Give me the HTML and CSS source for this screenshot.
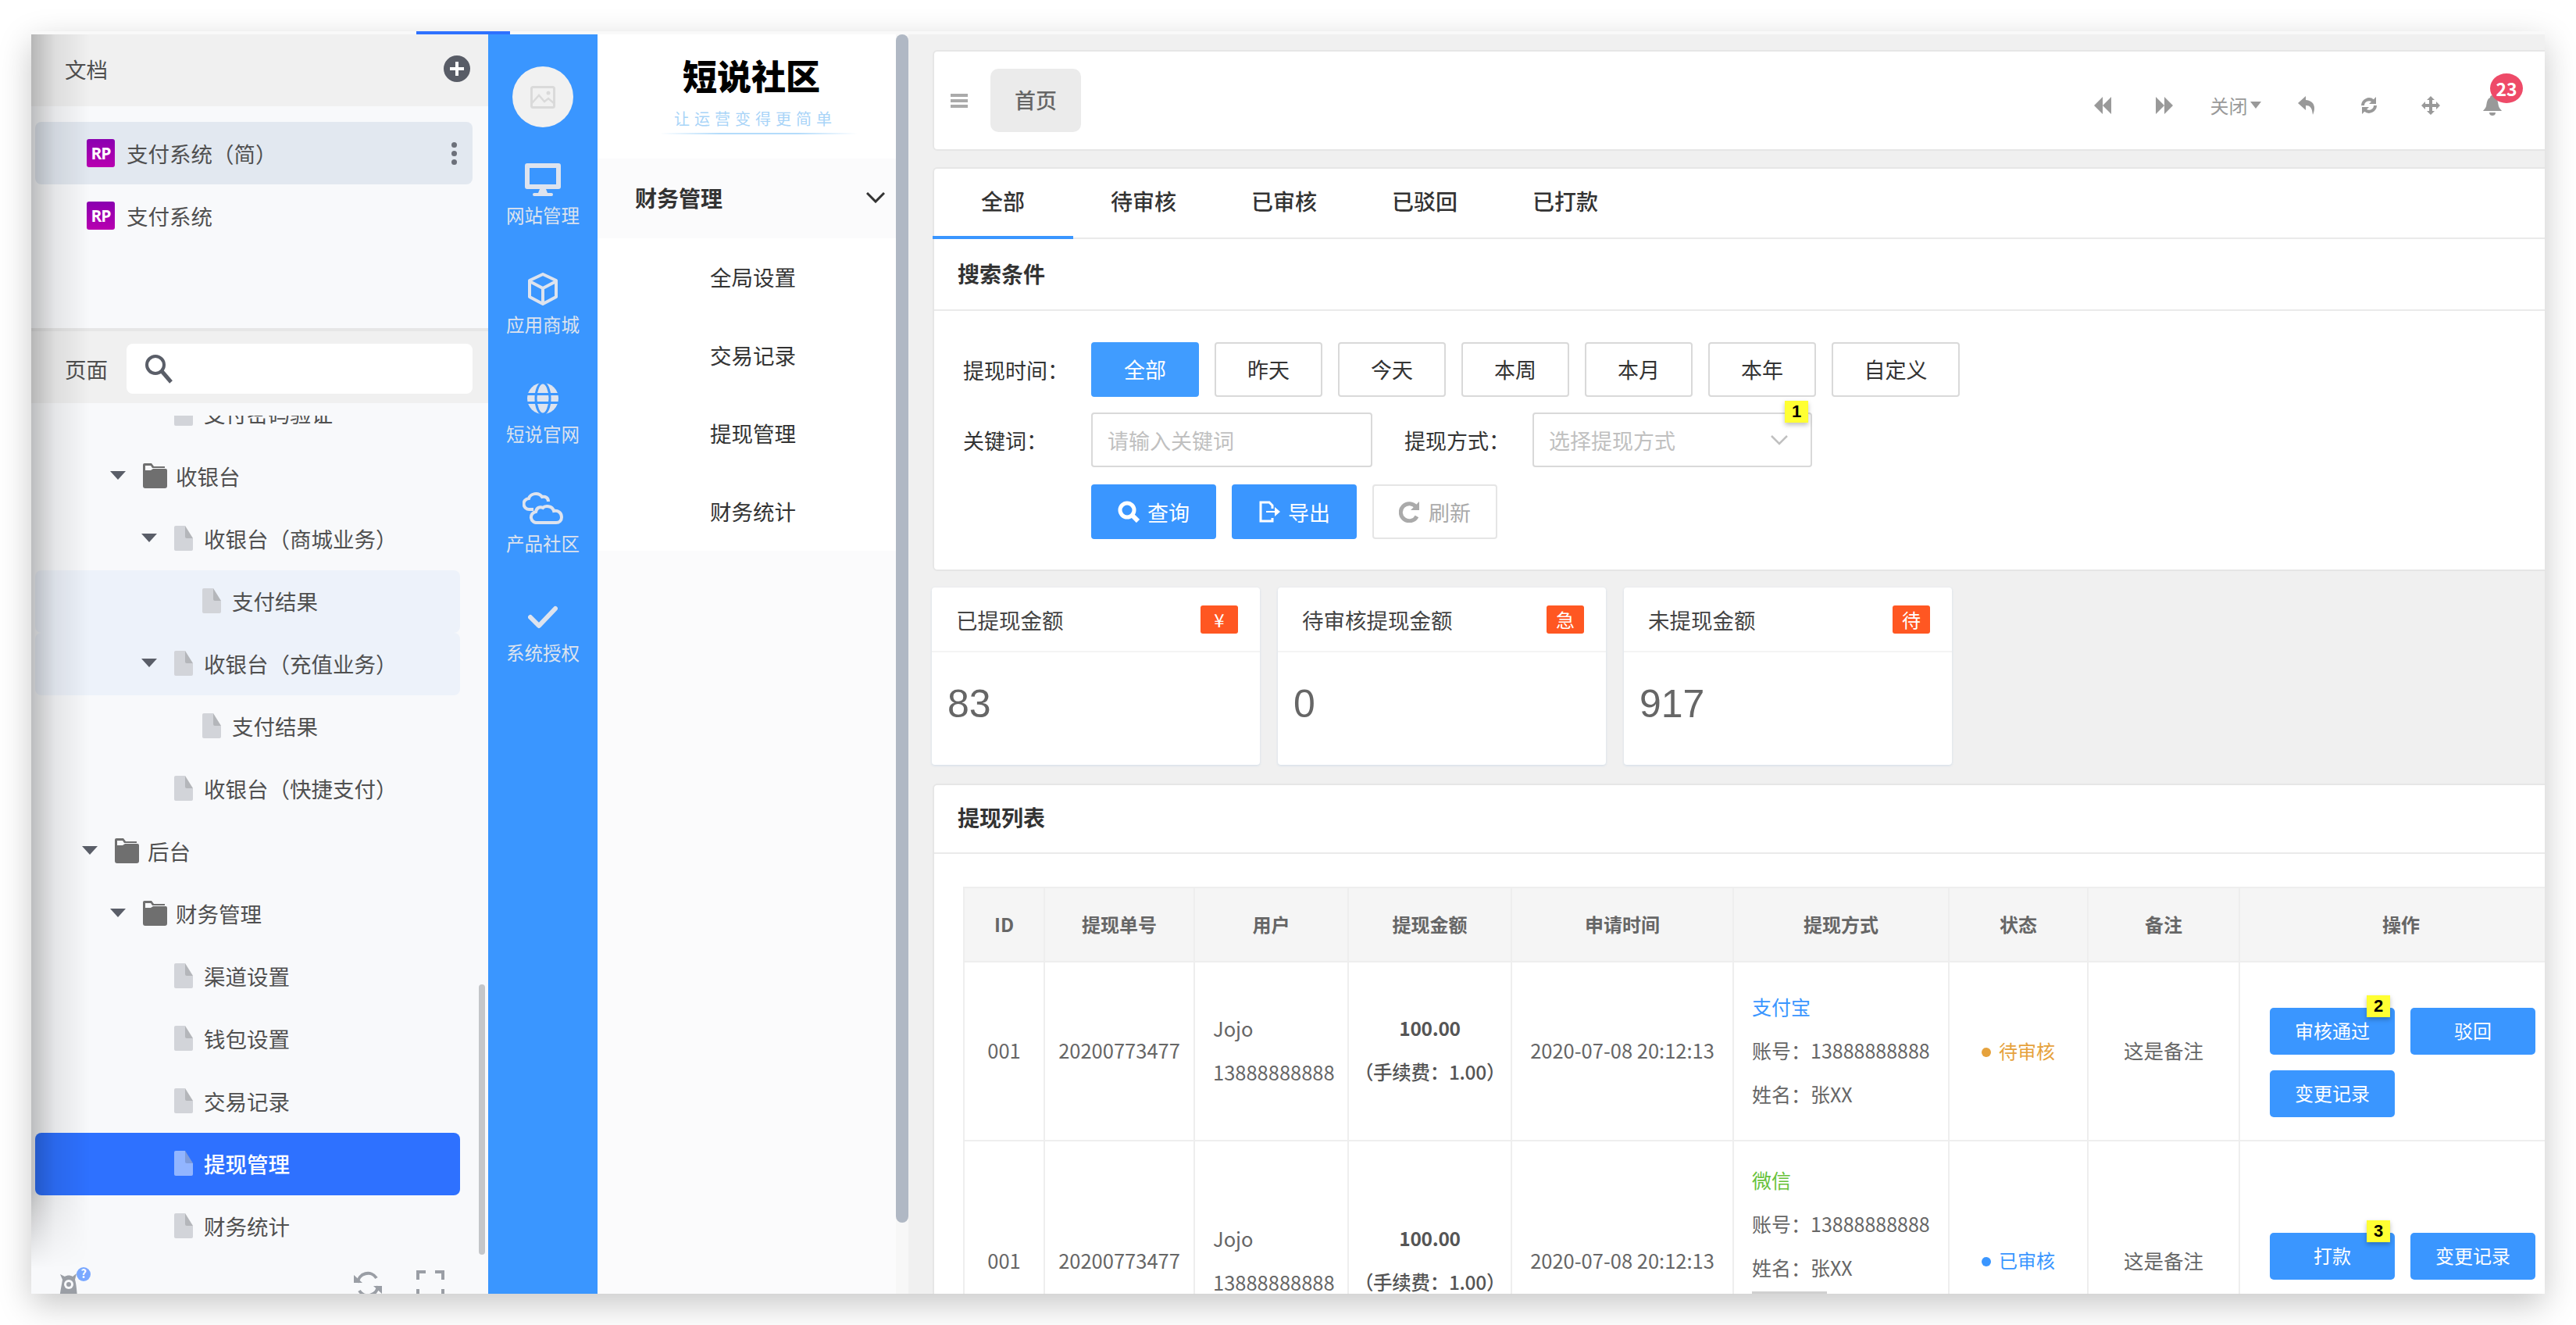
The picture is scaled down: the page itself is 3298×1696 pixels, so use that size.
FILE: index.html
```html
<!DOCTYPE html>
<html lang="zh-CN">
<head>
    <meta charset="UTF-8">
    <title>提现管理</title>
    <link rel="stylesheet" href="styles.css">
</head>
<body>
    <svg class="sprite" width="0" height="0">
        <symbol id="i-doc" viewBox="0 0 24 32"><path fill="currentColor" d="M2 0h12l10 16v14a2 2 0 0 1-2 2H2a2 2 0 0 1-2-2V2a2 2 0 0 1 2-2z"/><path fill="#000" fill-opacity=".14" d="M14 0l10 16H16a2 2 0 0 1-2-2z"/></symbol>
        <symbol id="i-folder" viewBox="0 0 31 32"><path fill="#6f6f6f" d="M2 0h9l3 4h14v2H12L10 3H3v26H1a1 1 0 0 1-1-1V2a2 2 0 0 1 2-2z"/><path fill="#6f6f6f" d="M0 11a2 2 0 0 1 2-2h8l3-2h16a2 2 0 0 1 2 2v20a3 3 0 0 1-3 3H3a3 3 0 0 1-3-3z"/></symbol>
        <symbol id="i-back" viewBox="0 0 24 24"><path fill="currentColor" d="M12 1v22L1 12zM23 1v22L12 12z"/></symbol>
        <symbol id="i-fwd" viewBox="0 0 24 24"><path fill="currentColor" d="M12 1v22l11-11zM1 1v22l11-11z"/></symbol>
        <symbol id="i-reply" viewBox="0 0 24 26"><path fill="currentColor" d="M10 1L0 10l10 9v-6c6 0 8 3 9 12 4-8 3-18-9-19z"/></symbol>
        <symbol id="i-sync" viewBox="0 0 24 24"><path fill="none" stroke="currentColor" stroke-width="4" d="M4 12a8 8 0 0 1 13-6M20 12a8 8 0 0 1-13 6"/><path fill="currentColor" d="M21 1v9h-9zM3 23v-9h9z"/></symbol>
        <symbol id="i-move" viewBox="0 0 24 24"><path fill="currentColor" d="M12 0l5 5h-3v5h5V7l5 5-5 5v-3h-5v5h3l-5 5-5-5h3v-5H5v3l-5-5 5-5v3h5V5H7z"/></symbol>
        <symbol id="i-bell" viewBox="0 0 24 26"><path fill="currentColor" d="M12 0c2 0 3 1 3 3 4 2 4 6 5 11 1 3 3 4 4 6H0c1-2 3-3 4-6 1-5 1-9 5-11 0-2 1-3 3-3zM8 22h8c0 3-2 4-4 4s-4-1-4-4z"/></symbol>
    </svg>

    <div class="window">
        <div class="strip"><span class="strip-mark"></span></div>
        <div class="app">

            <aside class="files">
                <div class="files-head">
                    <span>文档</span>
                    <span class="add-btn">
                        <svg width="34" height="34" viewBox="0 0 34 34"><circle cx="17" cy="17" r="17" fill="#585c66"/><path d="M17 8v18M8 17h18" stroke="#fff" stroke-width="4"/></svg>
                    </span>
                </div>
                <div class="doc-list">
                    <div class="doc-item selected">
                        <span class="rp">RP</span>
                        <span>支付系统（简）</span>
                        <span class="more"><i></i><i></i><i></i></span>
                    </div>
                    <div class="doc-item">
                        <span class="rp">RP</span>
                        <span>支付系统</span>
                    </div>
                </div>
                <div class="page-head">
                    <span>页面</span>
                    <div class="page-search">
                        <svg width="38" height="38" viewBox="0 0 38 38"><circle cx="15" cy="14" r="11" fill="none" stroke="#5a5e68" stroke-width="4"/><path d="M23 22l12 14" stroke="#5a5e68" stroke-width="5"/></svg>
                    </div>
                </div>
                <div class="tree">
                    <div class="tree-clip">
                        <div class="tree-inner">
                            <div class="node lv3"><svg class="doc" width="24" height="32"><use href="#i-doc"/></svg>支付密码验证</div>
                            <div class="node lv2"><span class="arrow"></span><svg class="folder" width="31" height="32"><use href="#i-folder"/></svg>收银台</div>
                            <div class="node lv3"><span class="arrow"></span><svg class="doc" width="24" height="32"><use href="#i-doc"/></svg>收银台（商城业务）</div>
                            <div class="node lv4 hl"><svg class="doc" width="24" height="32"><use href="#i-doc"/></svg>支付结果</div>
                            <div class="node lv3 hl"><span class="arrow"></span><svg class="doc" width="24" height="32"><use href="#i-doc"/></svg>收银台（充值业务）</div>
                            <div class="node lv4"><svg class="doc" width="24" height="32"><use href="#i-doc"/></svg>支付结果</div>
                            <div class="node lv3"><svg class="doc" width="24" height="32"><use href="#i-doc"/></svg>收银台（快捷支付）</div>
                            <div class="node lv1"><span class="arrow"></span><svg class="folder" width="31" height="32"><use href="#i-folder"/></svg>后台</div>
                            <div class="node lv2"><span class="arrow"></span><svg class="folder" width="31" height="32"><use href="#i-folder"/></svg>财务管理</div>
                            <div class="node lv3"><svg class="doc" width="24" height="32"><use href="#i-doc"/></svg>渠道设置</div>
                            <div class="node lv3"><svg class="doc" width="24" height="32"><use href="#i-doc"/></svg>钱包设置</div>
                            <div class="node lv3"><svg class="doc" width="24" height="32"><use href="#i-doc"/></svg>交易记录</div>
                            <div class="node lv3 active"><svg class="doc" width="24" height="32"><use href="#i-doc"/></svg>提现管理</div>
                            <div class="node lv3"><svg class="doc" width="24" height="32"><use href="#i-doc"/></svg>财务统计</div>
                        </div>
                    </div>
                    <div class="tree-scroll"></div>
                </div>
                <div class="files-foot">
                    <span class="ghost">
                        <svg width="44" height="46" viewBox="0 0 44 46"><path fill="#9a9ea5" d="M2 46c0-10 2-18 4-30l-3-7 6 3c3-2 7-2 10 0l5-4-2 8c2 6 3 20 3 30z"/><circle cx="14" cy="22" r="6" fill="#f8f9fb"/><circle cx="14" cy="22" r="3" fill="#9a9ea5"/><circle cx="33" cy="9" r="9" fill="#7aa8ff"/><text x="33" y="14" text-anchor="middle" class="ghost-q">?</text></svg>
                    </span>
                    <span class="foot-tools">
                        <svg width="36" height="36" viewBox="0 0 36 36"><path fill="none" stroke="#9a9ea5" stroke-width="4" d="M5 16a13 13 0 0 1 24-6M31 20a13 13 0 0 1-24 6"/><path fill="#9a9ea5" d="M0 6l11 10H0zM36 30L25 20h11z"/></svg>
                        <svg width="36" height="36" viewBox="0 0 36 36"><path fill="none" stroke="#9a9ea5" stroke-width="4" d="M2 12V2h10M24 2h10v10M2 24v10h10M24 34h10V24"/></svg>
                    </span>
                </div>
                <div class="files-shade"></div>
            </aside>

            <nav class="rail">
                <div class="avatar">
                    <svg width="32" height="29" viewBox="0 0 32 29"><rect x="1.5" y="1.5" width="29" height="26" rx="2" fill="none" stroke="#dadada" stroke-width="3"/><path d="M2 22l9-10 7 8 5-4 7 6" fill="none" stroke="#dadada" stroke-width="2.5"/><circle cx="23" cy="9" r="2.5" fill="#dadada"/></svg>
                </div>
                <div class="rail-item">
                    <span class="rail-icon"><svg width="46" height="42" viewBox="0 0 46 42"><path fill="#dde3ee" fill-rule="evenodd" d="M3 0h40a3 3 0 0 1 3 3v27a3 3 0 0 1-3 3H3a3 3 0 0 1-3-3V3a3 3 0 0 1 3-3zm3 6v21h34V6zM19 33h8l2 5h5a2 2 0 0 1 0 4H12a2 2 0 0 1 0-4h5z"/></svg></span>
                    网站管理
                </div>
                <div class="rail-item">
                    <span class="rail-icon"><svg width="42" height="42" viewBox="0 0 42 42"><path fill="none" stroke="#dde3ee" stroke-width="4" stroke-linejoin="round" d="M21 2l17 8v21l-17 9-17-9V10zM4 11l17 9 17-9M21 20v20"/></svg></span>
                    应用商城
                </div>
                <div class="rail-item">
                    <span class="rail-icon"><svg width="40" height="40" viewBox="0 0 40 40"><circle cx="20" cy="20" r="20" fill="#dde3ee"/><g fill="none" stroke="#3a96ff" stroke-width="3"><path d="M0 14.500h40M0 25.500h40"/><ellipse cx="20" cy="20" rx="9" ry="20"/></g></svg></span>
                    短说官网
                </div>
                <div class="rail-item">
                    <span class="rail-icon"><svg width="52" height="42" viewBox="0 0 52 42"><path fill="none" stroke="#dde3ee" stroke-width="4" d="M14 23H9a7 7 0 0 1-1-14C10 3 20 0 25 7c4-1 8 1 8 6M19 40a7 7 0 0 1-2-14c1-5 5-7 9-5 3-3 12-3 14 4 5-1 10 2 10 8 0 4-3 7-7 7z"/></svg></span>
                    产品社区
                </div>
                <div class="rail-item">
                    <span class="rail-icon"><svg width="38" height="30" viewBox="0 0 38 30"><path fill="none" stroke="#dde3ee" stroke-width="6" stroke-linecap="round" stroke-linejoin="round" d="M3 15l11 11L35 4"/></svg></span>
                    系统授权
                </div>
            </nav>

            <section class="menu">
                <div class="menu-inner">
                    <div class="logo">
                        <div class="logo-name">短说社区</div>
                        <div class="logo-tag">让运营变得更简单</div>
                        <div class="logo-line"></div>
                    </div>
                    <div class="menu-group">
                        <span>财务管理</span>
                        <svg width="24" height="14" viewBox="0 0 24 14"><path d="M1 1l11 11L23 1" fill="none" stroke="#333" stroke-width="3"/></svg>
                    </div>
                    <div class="menu-item">全局设置</div>
                    <div class="menu-item">交易记录</div>
                    <div class="menu-item">提现管理</div>
                    <div class="menu-item">财务统计</div>
                </div>
                <div class="menu-track"><div class="menu-thumb"></div></div>
            </section>

            <main class="main">
                <div class="card topbar">
                    <span class="burger"><i></i><i></i><i></i></span>
                    <span class="home-tab">首页</span>
                    <div class="tools">
                        <span class="tool"><svg width="24" height="24"><use href="#i-back"/></svg></span>
                        <span class="tool"><svg width="24" height="24"><use href="#i-fwd"/></svg></span>
                        <span class="tool tool-close">关闭<em></em></span>
                        <span class="tool"><svg width="24" height="26"><use href="#i-reply"/></svg></span>
                        <span class="tool"><svg width="24" height="24"><use href="#i-sync"/></svg></span>
                        <span class="tool"><svg width="24" height="24"><use href="#i-move"/></svg></span>
                        <span class="tool bell"><svg width="24" height="26"><use href="#i-bell"/></svg><b class="bell-count">23</b></span>
                    </div>
                </div>

                <div class="card search-card">
                    <div class="tabs">
                        <span class="tab on">全部</span>
                        <span class="tab">待审核</span>
                        <span class="tab">已审核</span>
                        <span class="tab">已驳回</span>
                        <span class="tab">已打款</span>
                    </div>
                    <div class="card-title">搜索条件</div>
                    <div class="form">
                        <div class="form-row">
                            <label class="form-label">提现时间：</label>
                            <div class="ranges">
                                <span class="range on">全部</span>
                                <span class="range">昨天</span>
                                <span class="range">今天</span>
                                <span class="range">本周</span>
                                <span class="range">本月</span>
                                <span class="range">本年</span>
                                <span class="range wide">自定义</span>
                            </div>
                        </div>
                        <div class="form-row">
                            <label class="form-label">关键词：</label>
                            <div class="field kw">请输入关键词</div>
                            <label class="form-label second">提现方式：</label>
                            <div class="field pick">
                                选择提现方式
                                <svg width="22" height="13" viewBox="0 0 22 13"><path d="M1 1l10 10L21 1" fill="none" stroke="#c0c0c0" stroke-width="2.500"/></svg>
                                <span class="note">1</span>
                            </div>
                        </div>
                        <div class="form-row last">
                            <span class="act primary">
                                <svg width="28" height="28" viewBox="0 0 28 28"><circle cx="12" cy="12" r="9" fill="none" stroke="#fff" stroke-width="5"/><path d="M18 18l8 8" stroke="#fff" stroke-width="6"/></svg>
                                查询
                            </span>
                            <span class="act primary">
                                <svg width="28" height="28" viewBox="0 0 28 28"><path fill="none" stroke="#fff" stroke-width="3" d="M18 10V6l-4-4H3v24h15v-4"/><path fill="#fff" d="M10 13h11V8l7 6-7 6v-5H10z"/></svg>
                                导出
                            </span>
                            <span class="act ghosted">
                                <svg width="28" height="28" viewBox="0 0 28 28"><path fill="none" stroke="#aaa" stroke-width="5" d="M22 8a11 11 0 1 0 1 12"/><path fill="#aaa" d="M26 1v11H15z"/></svg>
                                刷新
                            </span>
                        </div>
                    </div>
                </div>

                <div class="stats">
                    <div class="stat">
                        <div class="stat-head"><span>已提现金额</span><span class="tag">¥</span></div>
                        <div class="stat-num">83</div>
                    </div>
                    <div class="stat">
                        <div class="stat-head"><span>待审核提现金额</span><span class="tag">急</span></div>
                        <div class="stat-num">0</div>
                    </div>
                    <div class="stat">
                        <div class="stat-head"><span>未提现金额</span><span class="tag">待</span></div>
                        <div class="stat-num">917</div>
                    </div>
                </div>

                <div class="card list-card">
                    <div class="card-title">提现列表</div>
                    <table class="grid">
                        <colgroup>
                            <col class="c-id"><col class="c-no"><col class="c-user"><col class="c-amt"><col class="c-time"><col class="c-way"><col class="c-state"><col class="c-note"><col class="c-ops">
                        </colgroup>
                        <thead>
                            <tr>
                                <th>ID</th><th>提现单号</th><th>用户</th><th>提现金额</th><th>申请时间</th><th>提现方式</th><th>状态</th><th>备注</th><th>操作</th>
                            </tr>
                        </thead>
                        <tbody>
                            <tr class="row-a">
                                <td>001</td>
                                <td>20200773477</td>
                                <td class="left">Jojo<br>13888888888</td>
                                <td class="amt"><b>100.00</b><br>（手续费：1.00）</td>
                                <td>2020-07-08 20:12:13</td>
                                <td class="left way"><span class="blue">支付宝</span><br>账号：13888888888<br>姓名：张XX</td>
                                <td><span class="state orange">待审核</span></td>
                                <td>这是备注</td>
                                <td class="ops">
                                    <div class="ops-wrap">
                                        <span class="op">审核通过<span class="note">2</span></span>
                                        <span class="op">驳回</span>
                                        <span class="op">变更记录</span>
                                    </div>
                                </td>
                            </tr>
                            <tr class="row-b">
                                <td>001</td>
                                <td>20200773477</td>
                                <td class="left">Jojo<br>13888888888</td>
                                <td class="amt"><b>100.00</b><br>（手续费：1.00）</td>
                                <td>2020-07-08 20:12:13</td>
                                <td class="left way"><span class="green">微信</span><br>账号：13888888888<br>姓名：张XX<div class="way-btn"></div></td>
                                <td><span class="state blue">已审核</span></td>
                                <td>这是备注</td>
                                <td class="ops">
                                    <div class="ops-wrap">
                                        <span class="op">打款<span class="note">3</span></span>
                                        <span class="op">变更记录</span>
                                    </div>
                                </td>
                            </tr>
                        </tbody>
                    </table>
                </div>
            </main>
        </div>
    </div>
</body>
</html>
```

FILE: styles.css
```css
* {
    box-sizing: border-box;
}
html, body {
    height: 100%;
}
body {
    margin: 0;
    padding: 40px 40px 0;
    overflow: hidden;
    background-color: #fff;
    font-family: "Noto Sans CJK SC", "Liberation Sans", sans-serif;
    color: #555;
}
.sprite {
    position: absolute;
}
.window {
    width: 3218px;
    height: 1616px;
    overflow: hidden;
    background-color: #fff;
    box-shadow: 0 14px 40px rgba(0, 0, 0, 0.22);
}
.strip {
    height: 4px;
    background-color: #f9f9f9;
}
.strip-mark {
    display: block;
    width: 120px;
    height: 4px;
    margin-left: 493px;
    background-color: #2e71ff;
}
.app {
    display: flex;
    height: 1612px;
}

/* left file panel */
.files {
    position: relative;
    display: flex;
    flex-direction: column;
    flex: 0 0 585px;
    background-color: #f8f9fb;
    font-size: 27.500px;
    color: #505050;
}
.files-head {
    display: flex;
    align-items: center;
    justify-content: space-between;
    height: 92px;
    padding: 0 23px 4px 43px;
    background-color: #f0f0f0;
}
.add-btn {
    display: flex;
}
.doc-list {
    height: 284px;
    padding: 20px 20px 0 5px;
}
.doc-item {
    display: flex;
    align-items: center;
    gap: 15px;
    height: 80px;
    padding-left: 66px;
    border-radius: 8px;
}
.doc-item.selected {
    background-color: #e2e8f0;
}
.rp {
    display: flex;
    align-items: center;
    justify-content: center;
    width: 36px;
    height: 36px;
    border-radius: 3px;
    background: linear-gradient(#8a00b0, #b800b0);
    color: #fff;
    font-family: "Open Sans", sans-serif;
    font-size: 21px;
    font-weight: 700;
    letter-spacing: -1px;
}
.more {
    display: flex;
    flex-direction: column;
    gap: 4px;
    margin-left: auto;
    margin-right: 20px;
}
.more i {
    width: 7px;
    height: 7px;
    border-radius: 50%;
    background-color: #6c707a;
}
.page-head {
    display: flex;
    align-items: center;
    gap: 24px;
    height: 96px;
    padding: 4px 20px 0 43px;
    border-top: 4px solid #e6e6e6;
    background-color: #f0f0f0;
}
.page-search {
    display: flex;
    align-items: center;
    flex: 1;
    height: 64px;
    padding-left: 22px;
    border-radius: 8px;
    background-color: #fff;
}
.tree {
    position: relative;
    flex: 0 0 1094px;
    padding-top: 16px;
}
.tree-clip {
    height: 1078px;
    overflow: hidden;
}
.tree-inner {
    margin-top: -42px;
    padding: 0 36px 0 5px;
}
.node {
    position: relative;
    display: flex;
    align-items: center;
    height: 80px;
    padding-bottom: 3px;
    white-space: nowrap;
}
.node.lv1 { padding-left: 102px; }
.node.lv2 { padding-left: 138px; }
.node.lv3 { padding-left: 178px; }
.node.lv4 { padding-left: 214px; }
.node.hl {
    background-color: #edf2fa;
    border-radius: 8px;
}
.node.active {
    background-color: #2e71ff;
    border-radius: 8px;
    color: #fff;
    font-weight: 500;
}
.node.active .doc {
    color: #92b5ff;
}
.doc {
    flex: none;
    margin-right: 14px;
    color: #d2d4d9;
}
.folder {
    flex: none;
    margin-right: 11px;
}
.arrow {
    position: absolute;
    margin-left: -42px;
    width: 0;
    height: 0;
    border-left: 10px solid transparent;
    border-right: 10px solid transparent;
    border-top: 11px solid #5a5e68;
}
.tree-scroll {
    position: absolute;
    right: 4px;
    top: 744px;
    width: 8px;
    height: 346px;
    border-radius: 4px;
    background-color: #c4c6c9;
}
.files-foot {
    display: flex;
    justify-content: space-between;
    flex: 1;
    overflow: hidden;
    padding: 12px 56px 0 34px;
}
.foot-tools {
    display: flex;
    gap: 44px;
    padding-top: 4px;
}
.ghost-q {
    fill: #fff;
    font-size: 15px;
    font-weight: 700;
}
.files-shade {
    position: absolute;
    left: 0;
    top: 0;
    bottom: 0;
    width: 75px;
    background: linear-gradient(to right, rgba(0, 0, 0, 0.24), rgba(0, 0, 0, 0.08) 40%, rgba(0, 0, 0, 0));
    -webkit-mask-image: linear-gradient(to bottom, #000 92%, transparent 98%);
    pointer-events: none;
}

/* blue rail */
.rail {
    display: flex;
    flex-direction: column;
    align-items: center;
    flex: 0 0 140px;
    padding-top: 41px;
    background-color: #3a96ff;
    color: #dde3ee;
    font-size: 23.500px;
}
.avatar {
    display: flex;
    align-items: center;
    justify-content: center;
    width: 78px;
    height: 78px;
    margin-bottom: 26px;
    border-radius: 50%;
    background-color: #f1f1f1;
}
.rail-item {
    display: flex;
    flex-direction: column;
    align-items: center;
    height: 140px;
    padding-top: 20px;
    line-height: 34px;
}
.rail-icon {
    display: flex;
    align-items: center;
    justify-content: center;
    height: 42px;
    margin-bottom: 7px;
}

/* menu column */
.menu {
    position: relative;
    display: flex;
    flex: 0 0 398px;
    background-color: #fbfbfc;
}
.menu-inner {
    flex: 1;
}
.logo {
    height: 159px;
    padding-top: 26px;
    background-color: #fff;
    text-align: center;
}
.logo-name {
    height: 52px;
    padding-left: 12px;
    font-size: 44px;
    font-weight: 900;
    line-height: 52px;
    color: #000;
}
.logo-tag {
    margin-top: 16px;
    padding-left: 22px;
    font-size: 20px;
    line-height: 28px;
    letter-spacing: 6px;
    color: #a8d4f8;
}
.logo-line {
    height: 2px;
    margin: 4px 50px 0 80px;
    background: linear-gradient(to right, transparent, #b4dcfb 30%, #b4dcfb 70%, transparent);
}
.menu-group {
    display: flex;
    align-items: center;
    justify-content: space-between;
    height: 102px;
    padding: 0 14px 2px 48px;
    font-size: 28px;
    font-weight: 700;
    color: #333;
}
.menu-item {
    display: flex;
    align-items: center;
    justify-content: center;
    height: 100px;
    padding: 0 0 2px 16px;
    background-color: #fff;
    font-size: 27.500px;
    color: #333;
}
.menu-track {
    flex: 0 0 16px;
    background-color: #f7f7f7;
}
.menu-thumb {
    height: 1521px;
    border-radius: 8px;
    background-color: #b0b8c4;
}

/* main column */
.main {
    flex: 1;
    min-width: 0;
    overflow: hidden;
    padding: 20px 0 0 31px;
    background-color: #f0f0f0;
}
.card {
    margin-right: -10px;
    border: 2px solid #e6e6e6;
    border-radius: 6px;
    background-color: #fff;
}
.topbar {
    display: flex;
    align-items: center;
    height: 129px;
    padding-left: 21px;
}
.burger {
    display: flex;
    flex-direction: column;
    gap: 3px;
    width: 22px;
    margin-right: 29px;
}
.burger i {
    height: 4px;
    background-color: #aaa;
}
.home-tab {
    display: flex;
    align-items: center;
    justify-content: center;
    width: 116px;
    height: 81px;
    padding-bottom: 3px;
    border-radius: 10px;
    background-color: #ebebeb;
    font-size: 27px;
    font-weight: 500;
    color: #666;
}
.tools {
    display: flex;
    align-items: center;
    margin-left: auto;
    padding: 12px 36px 0 0;
    color: #999;
}
.tool {
    position: relative;
    display: flex;
    align-items: center;
    justify-content: center;
    width: 79px;
    font-size: 24px;
}
.tool-close {
    width: 104px;
}
.tool-close em {
    margin-left: 3px;
    border-left: 7px solid transparent;
    border-right: 7px solid transparent;
    border-top: 9px solid #999;
}
.bell-count {
    position: absolute;
    left: 37px;
    top: -28px;
    display: flex;
    align-items: center;
    justify-content: center;
    width: 42px;
    height: 38px;
    border-radius: 50%;
    background-color: #ee4a68;
    color: #fff;
    font-size: 23px;
    font-weight: 700;
}
.search-card {
    height: 517px;
    margin-top: 21px;
}
.tabs {
    display: flex;
    height: 90px;
    margin-left: -2px;
    border-bottom: 2px solid #eaeaea;
}
.tab {
    display: flex;
    align-items: center;
    justify-content: center;
    width: 180px;
    height: 90px;
    padding-bottom: 4px;
    font-size: 28px;
    font-weight: 500;
    color: #333;
    border-bottom: 4px solid transparent;
}
.tab.on {
    border-bottom-color: #3a96ff;
}
.card-title {
    display: flex;
    align-items: center;
    height: 92px;
    padding: 0 0 3px 30px;
    border-bottom: 2px solid #eaeaea;
    font-size: 28px;
    font-weight: 700;
    color: #333;
}
.form {
    padding: 40px 0 0 37px;
}
.form-row {
    display: flex;
    align-items: center;
    margin-bottom: 20px;
    font-size: 27px;
    color: #333;
}
.form-row.last {
    margin-top: 22px;
    padding-left: 164px;
    gap: 20px;
}
.form-label {
    flex: 0 0 164px;
}
.form-label.second {
    margin-left: 41px;
}
.ranges {
    display: flex;
    gap: 20px;
}
.range {
    display: flex;
    align-items: center;
    justify-content: center;
    width: 138px;
    height: 70px;
    padding-bottom: 2px;
    border: 2px solid #d9d9d9;
    border-radius: 4px;
}
.range.wide {
    width: 164px;
}
.range.on {
    border-color: #409cff;
    background-color: #409cff;
    color: #fff;
}
.field {
    position: relative;
    display: flex;
    align-items: center;
    justify-content: space-between;
    height: 70px;
    padding: 0 29px 0 19px;
    border: 2px solid #d9d9d9;
    border-radius: 4px;
    color: #c0c0c0;
}
.field.kw {
    width: 360px;
}
.field.pick {
    width: 358px;
}
.note {
    position: absolute;
    z-index: 1;
    display: flex;
    align-items: center;
    justify-content: center;
    width: 30px;
    height: 28px;
    background-color: #ffff33;
    box-shadow: 0 3px 6px rgba(0, 0, 0, 0.25);
    color: #000;
    font-family: "Liberation Sans", sans-serif;
    font-size: 22px;
    font-weight: 700;
}
.field .note {
    top: -17px;
    right: 3px;
}
.act {
    display: flex;
    align-items: center;
    justify-content: center;
    gap: 10px;
    width: 160px;
    height: 70px;
    border-radius: 4px;
}
.act.primary {
    background-color: #3a96ff;
    color: #fff;
}
.act.ghosted {
    border: 2px solid #e5e5e5;
    color: #aaa;
}
.stats {
    display: flex;
    gap: 23px;
    margin: 21px 0 0 -1px;
}
.stat {
    flex: 0 0 420px;
    height: 227px;
    border-radius: 4px;
    background-color: #fff;
    box-shadow: 0 1px 3px rgba(120, 160, 210, 0.25);
}
.stat-head {
    display: flex;
    align-items: center;
    justify-content: space-between;
    height: 83px;
    padding: 0 28px 0 31px;
    border-bottom: 2px solid #f4f4f4;
    font-size: 27.500px;
    color: #444;
}
.tag {
    display: flex;
    align-items: center;
    justify-content: center;
    width: 48px;
    height: 36px;
    border-radius: 3px;
    background-color: #ff5722;
    color: #fff;
    font-size: 24px;
}
.stat-num {
    display: flex;
    align-items: center;
    height: 132px;
    padding-left: 20px;
    font-family: "Liberation Sans", sans-serif;
    font-size: 50px;
    color: #666;
}
.list-card {
    height: 800px;
    margin-top: 24px;
    overflow: hidden;
}
.list-card .card-title {
    height: 88px;
    padding-bottom: 4px;
}
.grid {
    width: 2047px;
    margin: 42px 0 0 37px;
    border-collapse: collapse;
    table-layout: fixed;
    font-size: 25.500px;
    color: #666;
}
.c-id { width: 103px; }
.c-no { width: 192px; }
.c-user { width: 197px; }
.c-amt { width: 209px; }
.c-time { width: 284px; }
.c-way { width: 276px; }
.c-state { width: 178px; }
.c-note { width: 194px; }
.c-ops { width: 414px; }
.grid th, .grid td {
    border: 2px solid #eeeeee;
    text-align: center;
    white-space: nowrap;
    padding: 0;
}
.grid th {
    height: 95px;
    padding-bottom: 3px;
    background-color: #f5f5f5;
    font-size: 24px;
    font-weight: 700;
}
.grid td {
    padding-bottom: 3px;
    line-height: 56px;
}
.row-a td {
    height: 229px;
}
.row-b td {
    height: 308px;
}
.grid td.left {
    padding-left: 23px;
    text-align: left;
}
.grid td.way {
    font-size: 25px;
}
.grid .amt {
    font-weight: 500;
    font-size: 24.500px;
    letter-spacing: -0.300px;
    color: #555;
}
.blue {
    color: #3a96ff;
}
.green {
    color: #67c23a;
}
.orange {
    color: #e6a23c;
}
.state {
    font-size: 24px;
}
.state::before {
    content: "";
    display: inline-block;
    width: 12px;
    height: 12px;
    margin-right: 10px;
    border-radius: 50%;
    background-color: currentColor;
    vertical-align: 2px;
}
.way-btn {
    width: 96px;
    height: 60px;
    margin: 3px 0 31px;
    background-color: #d0d0d0;
}
.grid td.ops {
    padding-left: 38px;
    vertical-align: top;
}
.row-a .ops {
    padding-top: 58px;
}
.row-b .ops {
    padding-top: 117px;
}
.ops-wrap {
    display: flex;
    flex-wrap: wrap;
    gap: 20px;
    width: 340px;
}
.op {
    position: relative;
    display: flex;
    align-items: center;
    justify-content: center;
    width: 160px;
    height: 60px;
    padding-bottom: 2px;
    border-radius: 5px;
    background-color: #3a96ff;
    color: #fff;
    font-size: 24px;
}
.op .note {
    top: -16px;
    right: 6px;
}
```
